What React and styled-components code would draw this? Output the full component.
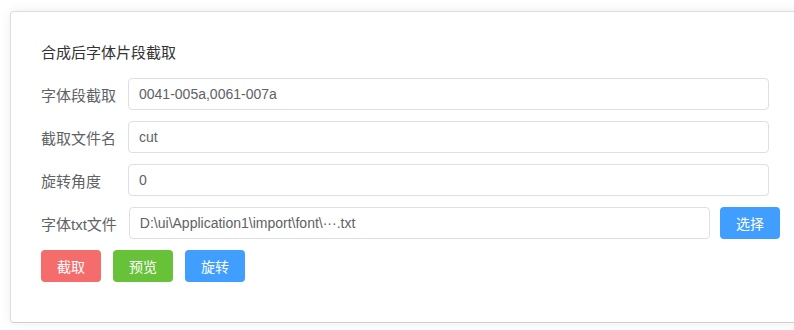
import React from "react";
import styled, { createGlobalStyle } from "styled-components";

const GlobalStyle = createGlobalStyle`
  html, body {
    margin: 0;
    padding: 0;
    overflow: hidden;
    background: #fff;
  }
  body {
    font-family: "Liberation Sans", "Noto Sans CJK SC", sans-serif;
  }
`;

const Page = styled.div`
  padding: 11px 0 8px 10px;
  width: 794px;
  box-sizing: border-box;
  overflow: hidden;
`;

const Card = styled.div`
  width: 801px;
  flex-shrink: 0;
  box-sizing: border-box;
  padding: 30px 30px 40px 30px;
  background: #fff;
  border: 1px solid #dcdcdc;
  border-bottom-color: #cfcfcf;
  border-radius: 4px;
  box-shadow: 0 0 12px rgba(0, 0, 0, 0.07);
`;

const Title = styled.div`
  font-size: 15px;
  line-height: 22px;
  color: #333;
  margin-bottom: 14px;
`;

const Row = styled.div`
  display: flex;
  align-items: center;
  height: 32px;
  margin-bottom: 11px;
  padding-right: ${(p) => (p.$inset ? "11px" : "0")};
`;

const Label = styled.span`
  min-width: 75px;
  margin-right: 12px;
  font-size: 15px;
  color: #606266;
  white-space: nowrap;
`;

const Input = styled.input`
  flex: 1;
  min-width: 0;
  height: 32px;
  box-sizing: border-box;
  padding: 0 10px;
  border: 1px solid #dcdfe6;
  border-radius: 4px;
  font-family: "Liberation Sans", "Noto Sans CJK SC", sans-serif;
  font-size: 14px;
  color: #606266;
  outline: none;
`;

const colors = {
  danger: "#f56c6c",
  success: "#67c23a",
  primary: "#409eff",
};

const Button = styled.button`
  width: 60px;
  height: 32px;
  flex-shrink: 0;
  padding: 0;
  border: none;
  border-radius: 4px;
  background: ${(p) => colors[p.$kind]};
  color: #fff;
  font-family: "Liberation Sans", "Noto Sans CJK SC", sans-serif;
  font-size: 14px;
  cursor: pointer;
  margin-left: ${(p) => (p.$side ? "10px" : "0")};
`;

const Actions = styled.div`
  display: flex;
  gap: 12px;
`;

export default function App() {
  return (
    <Page>
      <GlobalStyle />
      <Card>
        <Title>合成后字体片段截取</Title>
        <Row $inset>
          <Label>字体段截取</Label>
          <Input defaultValue="0041-005a,0061-007a" />
        </Row>
        <Row $inset>
          <Label>截取文件名</Label>
          <Input defaultValue="cut" />
        </Row>
        <Row $inset>
          <Label>旋转角度</Label>
          <Input defaultValue="0" />
        </Row>
        <Row>
          <Label>字体txt文件</Label>
          <Input defaultValue={"D:\\ui\\Application1\\import\\font\\···.txt"} />
          <Button $kind="primary" $side>选择</Button>
        </Row>
        <Actions>
          <Button $kind="danger">截取</Button>
          <Button $kind="success">预览</Button>
          <Button $kind="primary">旋转</Button>
        </Actions>
      </Card>
    </Page>
  );
}
